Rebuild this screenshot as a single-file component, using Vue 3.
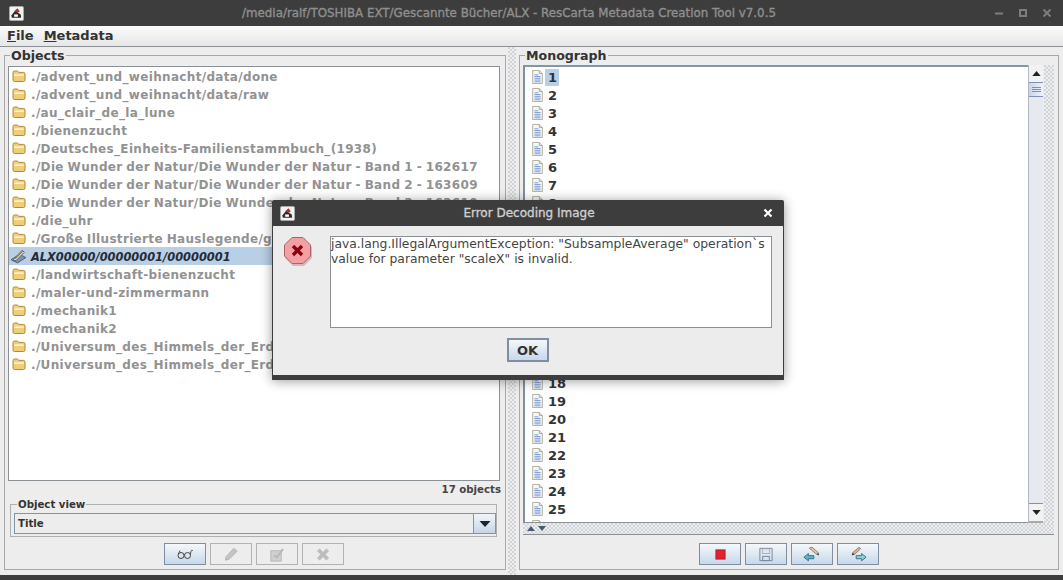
<script setup>
const objects = [
  './advent_und_weihnacht/data/done',
  './advent_und_weihnacht/data/raw',
  './au_clair_de_la_lune',
  './bienenzucht',
  './Deutsches_Einheits-Familienstammbuch_(1938)',
  './Die Wunder der Natur/Die Wunder der Natur - Band 1 - 162617',
  './Die Wunder der Natur/Die Wunder der Natur - Band 2 - 163609',
  './Die Wunder der Natur/Die Wunder der Natur - Band 3 - 163610',
  './die_uhr',
  './Große Illustrierte Hauslegende/gross',
  'ALX00000/00000001/00000001',
  './landwirtschaft-bienenzucht',
  './maler-und-zimmermann',
  './mechanik1',
  './mechanik2',
  './Universum_des_Himmels_der_Erde/Band 1',
  './Universum_des_Himmels_der_Erde/Band 2'
]
const pages = Array.from({ length: 26 }, (_, i) => i + 1)
</script>

<template>
  <div class="app">
    <header class="titlebar">
      <svg class="appicon" viewBox="0 0 16 16"><rect x="0.5" y="0.5" width="15" height="15" rx="1.5" fill="#f2f2f2" stroke="#aaa"/><path d="M2.5 10 L6.5 5 L12.5 9 L13 12.5 H3 Z" fill="#2c2c2c"/><path d="M6 5 L9 2.5 L11.5 5.5 L9 7.5 Z" fill="#a8323a"/><rect x="5.5" y="9" width="4" height="2.5" fill="#fff"/></svg>
      <div class="wintitle">/media/ralf/TOSHIBA EXT/Gescannte Bücher/ALX - ResCarta Metadata Creation Tool v7.0.5</div>
      <div class="winctl">
        <svg viewBox="0 0 10 10"><path d="M1 5.5H9" stroke="#7d7d7d" stroke-width="2"/></svg>
        <svg viewBox="0 0 10 10"><rect x="2" y="2" width="6" height="6" fill="none" stroke="#7d7d7d" stroke-width="2"/></svg>
        <svg viewBox="0 0 10 10"><path d="M1.5 1.5L8.5 8.5M8.5 1.5L1.5 8.5" stroke="#7d7d7d" stroke-width="2"/></svg>
      </div>
    </header>

    <nav class="menubar">
      <span class="menu"><u>F</u>ile</span>
      <span class="menu"><u>M</u>etadata</span>
    </nav>

    <main class="work">
      <section class="group left">
        <span class="legend">Objects</span>
        <div class="list objects">
          <div v-for="(o, i) in objects" :key="o" class="row" :class="{ selected: i === 10 }">
            <svg v-if="i !== 10" class="ico" viewBox="0 0 14 14"><path d="M1 3.5 Q1 2 2.5 2 H5.5 L6.8 3.4 H11.5 Q13 3.4 13 5 V11 Q13 12.5 11.5 12.5 H2.5 Q1 12.5 1 11 Z" fill="#f0cd78" stroke="#b08a3a"/><path d="M2.2 5.3 H11.8 V7 H2.2 Z" fill="#fff3c9"/></svg>
            <svg v-else class="ico" viewBox="0 0 16 16"><path d="M1 11 L7 14 L15 9 L9 6 Z" fill="#7d92b4" stroke="#3d4c66" stroke-width=".7"/><path d="M3.5 10.5 L11.5 2 L13.5 4 L6 11.5 L3 12 Z" fill="#e8e2c8" stroke="#556" stroke-width=".8"/><path d="M5 10 L12 3" stroke="#8c7a3a"/></svg>
            <span class="rowtext">{{ o }}</span>
          </div>
        </div>
        <div class="count">17 objects</div>
        <div class="viewgroup">
          <span class="legend small">Object view</span>
          <div class="combo">
            <span class="combotext">Title</span>
            <span class="comboarrow"><svg viewBox="0 0 12 8"><path d="M0.5 1H11.5L6 7Z" fill="#222"/></svg></span>
          </div>
        </div>
        <div class="buttons">
          <button class="tb on">
            <svg viewBox="0 0 18 12"><circle cx="5" cy="7.5" r="3" fill="none" stroke="#444"/><circle cx="11.5" cy="7.5" r="3" fill="none" stroke="#444"/><path d="M8 7Q8.2 6.3 8.5 7M14.4 6.5L15 3Q15.5 1.8 16.8 2.5M2.4 6L4 2.5" fill="none" stroke="#444" stroke-width=".9"/></svg>
          </button>
          <button class="tb off">
            <svg viewBox="0 0 18 18"><path d="M3 15 L4 11 L12 2.5 L15.5 5.5 L7 14 Z" fill="#c4c4c4" stroke="#b4b4b4"/></svg>
          </button>
          <button class="tb off">
            <svg viewBox="0 0 18 18"><rect x="2.5" y="5" width="11" height="11" fill="#cfcfcf" stroke="#b8b8b8"/><path d="M6 10 L9 12 L15.5 3" fill="none" stroke="#b8b8b8" stroke-width="2"/></svg>
          </button>
          <button class="tb off">
            <svg viewBox="0 0 18 18"><path d="M4 4 L14 14 M14 4 L4 14" stroke="#bdbdbd" stroke-width="4"/></svg>
          </button>
        </div>
      </section>

      <div class="splitter"><div class="dots"></div></div>

      <section class="group right">
        <span class="legend">Monograph</span>
        <div class="toprow">
          <div class="list pages">
            <div v-for="p in pages" :key="p" class="row pagerow">
              <svg class="ico doc" viewBox="0 0 14 16"><path d="M1.5 .5 H9 L12.5 4 V15.5 H1.5 Z" fill="#f5f7fc" stroke="#a9a58f"/><path d="M9 .5 V4 H12.5" fill="#e8e4d0" stroke="#a9a58f"/><path d="M3.5 5.5H8M3.5 7.5H10.5M3.5 9.5H10.5M3.5 11.5H10.5M3.5 13.5H10.5" stroke="#6f8fc9"/></svg>
              <span v-if="p < 26" class="num" :class="{ hl: p === 1 }">{{ p }}</span>
            </div>
          </div>
          <div class="scrollbar">
            <div class="sbtn"><svg viewBox="0 0 10 6"><path d="M5 0L10 6H0Z" fill="#222"/></svg></div>
            <div class="thumb"><i></i><i></i><i></i></div>
            <div class="track"></div>
            <div class="sbtn down"><svg viewBox="0 0 10 6"><path d="M0 0H10L5 6Z" fill="#222"/></svg></div>
          </div>
          <div class="vdots"></div>
        </div>
        <div class="hdots">
          <svg viewBox="0 0 10 6"><path d="M5 0L10 6H0Z" fill="#4a5a70"/></svg>
          <svg viewBox="0 0 10 6"><path d="M0 0H10L5 6Z" fill="#4a5a70"/></svg>
        </div>
        <div class="buttons rightbtns">
          <button class="tb on2">
            <svg viewBox="0 0 12 12"><rect x="1" y="1" width="10" height="10" fill="#e8202c" stroke="#a3222c"/></svg>
          </button>
          <button class="tb on2">
            <svg viewBox="0 0 18 18"><path d="M2.5 2.5H15.5V15.5H2.5Z" fill="none" stroke="#78869a"/><rect x="5" y="3" width="8" height="5" fill="#dfe7f1" stroke="#8b98aa" stroke-width=".7"/><rect x="5.5" y="11" width="7" height="4.5" fill="none" stroke="#78869a"/></svg>
          </button>
          <button class="tb on2">
            <svg viewBox="0 0 20 18"><path d="M7 2L10 0.8L17 7L15.5 9Z" fill="#d8c9a0" stroke="#7a6a55" stroke-width=".8"/><path d="M15.5 9L18 10L17 7Z" fill="#333"/><path d="M1 12L6 8V10.3H12V13.7H6V16Z" fill="#5fb4c9" stroke="#2d6c80"/></svg>
          </button>
          <button class="tb on2">
            <svg viewBox="0 0 20 18"><path d="M4 7L11 1L13 2.5L6 9Z" fill="#d8b48a" stroke="#7a6a55" stroke-width=".8"/><path d="M6 9L3 10L4 7Z" fill="#333"/><path d="M19 12L14 8V10.3H8V13.7H14V16Z" fill="#8fd0e0" stroke="#2d6c80"/></svg>
          </button>
        </div>
      </section>
    </main>

    <footer class="bottom"></footer>

    <div class="dialog">
      <div class="dlgtitle">
        <svg class="appicon dlgicon" viewBox="0 0 16 16"><rect x="0.5" y="0.5" width="15" height="15" rx="1.5" fill="#f2f2f2" stroke="#aaa"/><path d="M2.5 10 L6.5 5 L12.5 9 L13 12.5 H3 Z" fill="#2c2c2c"/><path d="M6 5 L9 2.5 L11.5 5.5 L9 7.5 Z" fill="#a8323a"/><rect x="5.5" y="9" width="4" height="2.5" fill="#fff"/></svg>
        <span class="dlgname">Error Decoding Image</span>
        <svg class="dlgclose" viewBox="0 0 10 10"><path d="M1.5 1.5L8.5 8.5M8.5 1.5L1.5 8.5" stroke="#fff" stroke-width="2.2"/></svg>
      </div>
      <div class="dlgbody">
        <div class="dlgmain">
          <svg class="erricon" viewBox="0 0 30 30">
            <path d="M9 2H20L28 10V21L20 29H9L1 21V10Z" fill="#b9868a" opacity=".5" transform="translate(1 1)"/>
            <path d="M9 1.5H20L27.5 9V20L20 27.5H9L1.5 20V9Z" fill="#f2a0a4" stroke="#a8666a"/>
            <path d="M10 10L19 19M19 10L10 19" stroke="#8e0010" stroke-width="3.4"/>
          </svg>
          <div class="msg">java.lang.IllegalArgumentException: "SubsampleAverage" operation`s<br>value for parameter "scaleX" is invalid.</div>
        </div>
        <div class="dlgfoot"><button class="ok">OK</button></div>
      </div>
    </div>
  </div>
</template>

<style scoped>
.app { position: relative; width: 1063px; height: 580px; overflow: hidden; display: flex; flex-direction: column; background: #ededed; font-family: "DejaVu Sans", sans-serif; color: #333; }
.titlebar { height: 26px; flex: none; background: #3d3d3d; display: flex; align-items: center; padding: 0 7px 0 9px; box-sizing: border-box; position: relative; }
.appicon { width: 15px; height: 15px; flex: none; }
.wintitle { flex: 1; text-align: center; font-size: 11.85px; -webkit-text-stroke: .35px #8f8f8f; color: #8f8f8f; white-space: nowrap; }
.winctl { display: flex; gap: 14px; padding-right: 4px; }
.winctl svg { width: 10px; height: 10px; }
.menubar { height: 21px; flex: none; box-sizing: border-box; background: linear-gradient(#fbfbfb, #e6e6e6); border-bottom: 1px solid #8d9196; display: flex; align-items: center; padding: 0 0 2px 7px; gap: 10px; font-size: 13px; font-weight: bold; color: #333; }
.work { flex: 1; display: flex; min-height: 0; padding: 8px 4px 5px 4px; }
.group { position: relative; box-sizing: border-box; border: 1px solid #a8a8a8; display: flex; flex-direction: column; }
.left { width: 502px; padding: 10px 5px 4px 3px; }
.right { flex: 1; padding: 9px 4px 0 3px; }
.legend { position: absolute; left: 5px; top: -7px; background: #ededed; padding: 0 1px; font-size: 12.6px; line-height: 14px; font-weight: bold; color: #333; }
.legend.small { left: 6px; top: -7px; font-size: 10.2px; }
.list { background: #fff; box-sizing: border-box; overflow: hidden; }
.objects { flex: 1; min-height: 0; border: 1px solid #8b9095; }
.row { height: 18px; display: flex; align-items: center; white-space: nowrap; }
.ico { width: 14px; height: 14px; flex: none; margin-left: 3px; }
.rowtext { margin-left: 5px; margin-top: 1px; font-size: 12px; font-weight: bold; letter-spacing: .33px; word-spacing: -.7px; color: #929292; }
.selected { background: #b8cfe6; }
.selected .ico { width: 17px; height: 17px; margin-left: 1px; }
.selected .rowtext { color: #262b36; font-style: italic; margin-left: 4px; font-size: 11.4px; letter-spacing: 0; }
.count { height: 18px; margin-right: -1px; text-align: right; font-size: 10.2px; line-height: 18px; font-weight: bold; color: #444; }
.viewgroup { position: relative; margin: 5px 3px 0 2px; height: 33px; box-sizing: border-box; border: 1px solid #b0b0b0; padding: 8px 0 0 3px; }
.combo { height: 21px; box-sizing: border-box; border: 1px solid #7f95aa; background: #ededed; display: flex; align-items: center; }
.combotext { flex: 1; font-size: 10.2px; font-weight: bold; padding-left: 3px; color: #333; }
.comboarrow { width: 22px; height: 100%; box-sizing: border-box; border-left: 1px solid #7f95aa; background: linear-gradient(#f3f6fa, #c5d5e6); display: flex; align-items: center; justify-content: center; }
.comboarrow svg { width: 12px; height: 8px; }
.buttons { display: flex; gap: 4px; margin-top: 6px; }
.left .buttons { padding-left: 156px; }
.rightbtns { padding-left: 176px; margin-top: 8px; }
.tb { width: 42px; height: 22px; box-sizing: border-box; padding: 0; display: flex; align-items: center; justify-content: center; background: #ededed; border: 1px solid #b2b2b2; }
.tb.on { border-color: #7f8fa1; background: linear-gradient(#f5f8fb, #c6d8ea); }
.tb.on2 { border-color: #7f8fa1; background: linear-gradient(#f5f8fb, #c6d8ea); }
.tb svg { width: 18px; height: 17px; }
.tb.on svg { height: 12px; }
.tb.on2:first-child svg { width: 11px; height: 11px; }
.splitter { width: 13px; flex: none; margin: -8px 0 -5px 0; padding: 0 3px 0 2px; box-sizing: border-box; }
.dots, .vdots, .hdots {
  background-image: radial-gradient(circle at 1px 1px, #b2bac2 .6px, transparent .8px), radial-gradient(circle at 3px 3px, #b2bac2 .6px, transparent .8px);
  background-size: 4px 4px;
}
.dots { height: 100%; width: 8px; }
.toprow { display: flex; height: 458px; flex: none; }
.pages { flex: 1; min-width: 0; height: 100%; border-left: 2px solid #7f8ea0; border-top: 2px solid #7f99a8; border-bottom: 1px solid #8b9095; padding-top: 1px; }
.pagerow .doc { margin-left: 6px; width: 13px; height: 14px; }
.num { margin-left: 1px; padding: 0 2px 0 3px; height: 17px; line-height: 17px; font-size: 13px; font-weight: bold; color: #333; }
.num.hl { background: #b8cfe6; }
.scrollbar { width: 15px; flex: none; display: flex; flex-direction: column; background: #e6eaf0; border-left: 1px solid #b0b8c2; box-sizing: border-box; }
.sbtn { height: 17px; flex: none; background: #f2f2f2; display: flex; align-items: center; justify-content: center; }
.sbtn svg { width: 9px; height: 5px; }
.sbtn.down { border-top: 1px solid #8a9098; border-bottom: 2px solid #a8a8a8; }
.thumb { height: 15px; flex: none; box-sizing: border-box; background: linear-gradient(90deg, #c6d5ea, #eef3fb); border: 1px solid #8090b4; border-width: 1px 0; display: flex; flex-direction: column; justify-content: center; align-items: center; gap: 1px; }
.thumb i { width: 9px; height: 1px; background: #7f90b0; display: block; }
.track { flex: 1; }
.vdots { width: 10px; flex: none; margin-left: 1px; }
.hdots { height: 12px; flex: none; border-bottom: 1px solid #8a9096; display: flex; align-items: center; gap: 3px; padding-left: 4px; box-sizing: border-box; }
.hdots svg { width: 8px; height: 5px; }
.bottom { height: 5px; flex: none; background: #3d3d3d; }

.dialog { position: absolute; left: 272px; top: 200px; width: 512px; height: 180px; background: #3d3d3d; box-shadow: 0 1px 12px rgba(0,0,0,.4); display: flex; flex-direction: column; border-radius: 2px 2px 0 0; }
.dlgtitle { height: 26px; flex: none; display: flex; align-items: center; padding: 0 11px 0 8px; position: relative; }
.dlgname { flex: 1; text-align: center; font-size: 12px; -webkit-text-stroke: .35px #cfcfcf; color: #cfcfcf; }
.dlgclose { width: 10px; height: 10px; }
.dlgbody { height: 149px; flex: none; background: #ececec; margin: 0 1px; box-sizing: border-box; padding: 10px 11px 0 10px; display: flex; flex-direction: column; }
.dlgmain { display: flex; }
.erricon { width: 30px; height: 30px; flex: none; margin-right: 17px; }
.msg { flex: 1; height: 92px; box-sizing: border-box; background: #fff; border: 1px solid #8b9095; font-size: 12.35px; line-height: 15px; color: #444; white-space: nowrap; }
.dlgfoot { display: flex; justify-content: center; padding-top: 10px; }
.ok { width: 42px; height: 24px; box-sizing: border-box; padding: 0; border: 2px solid #7f8fa1; background: linear-gradient(#f5f8fb, #c6d8ea); font-family: "DejaVu Sans", sans-serif; font-size: 13px; font-weight: bold; color: #333; }
</style>
